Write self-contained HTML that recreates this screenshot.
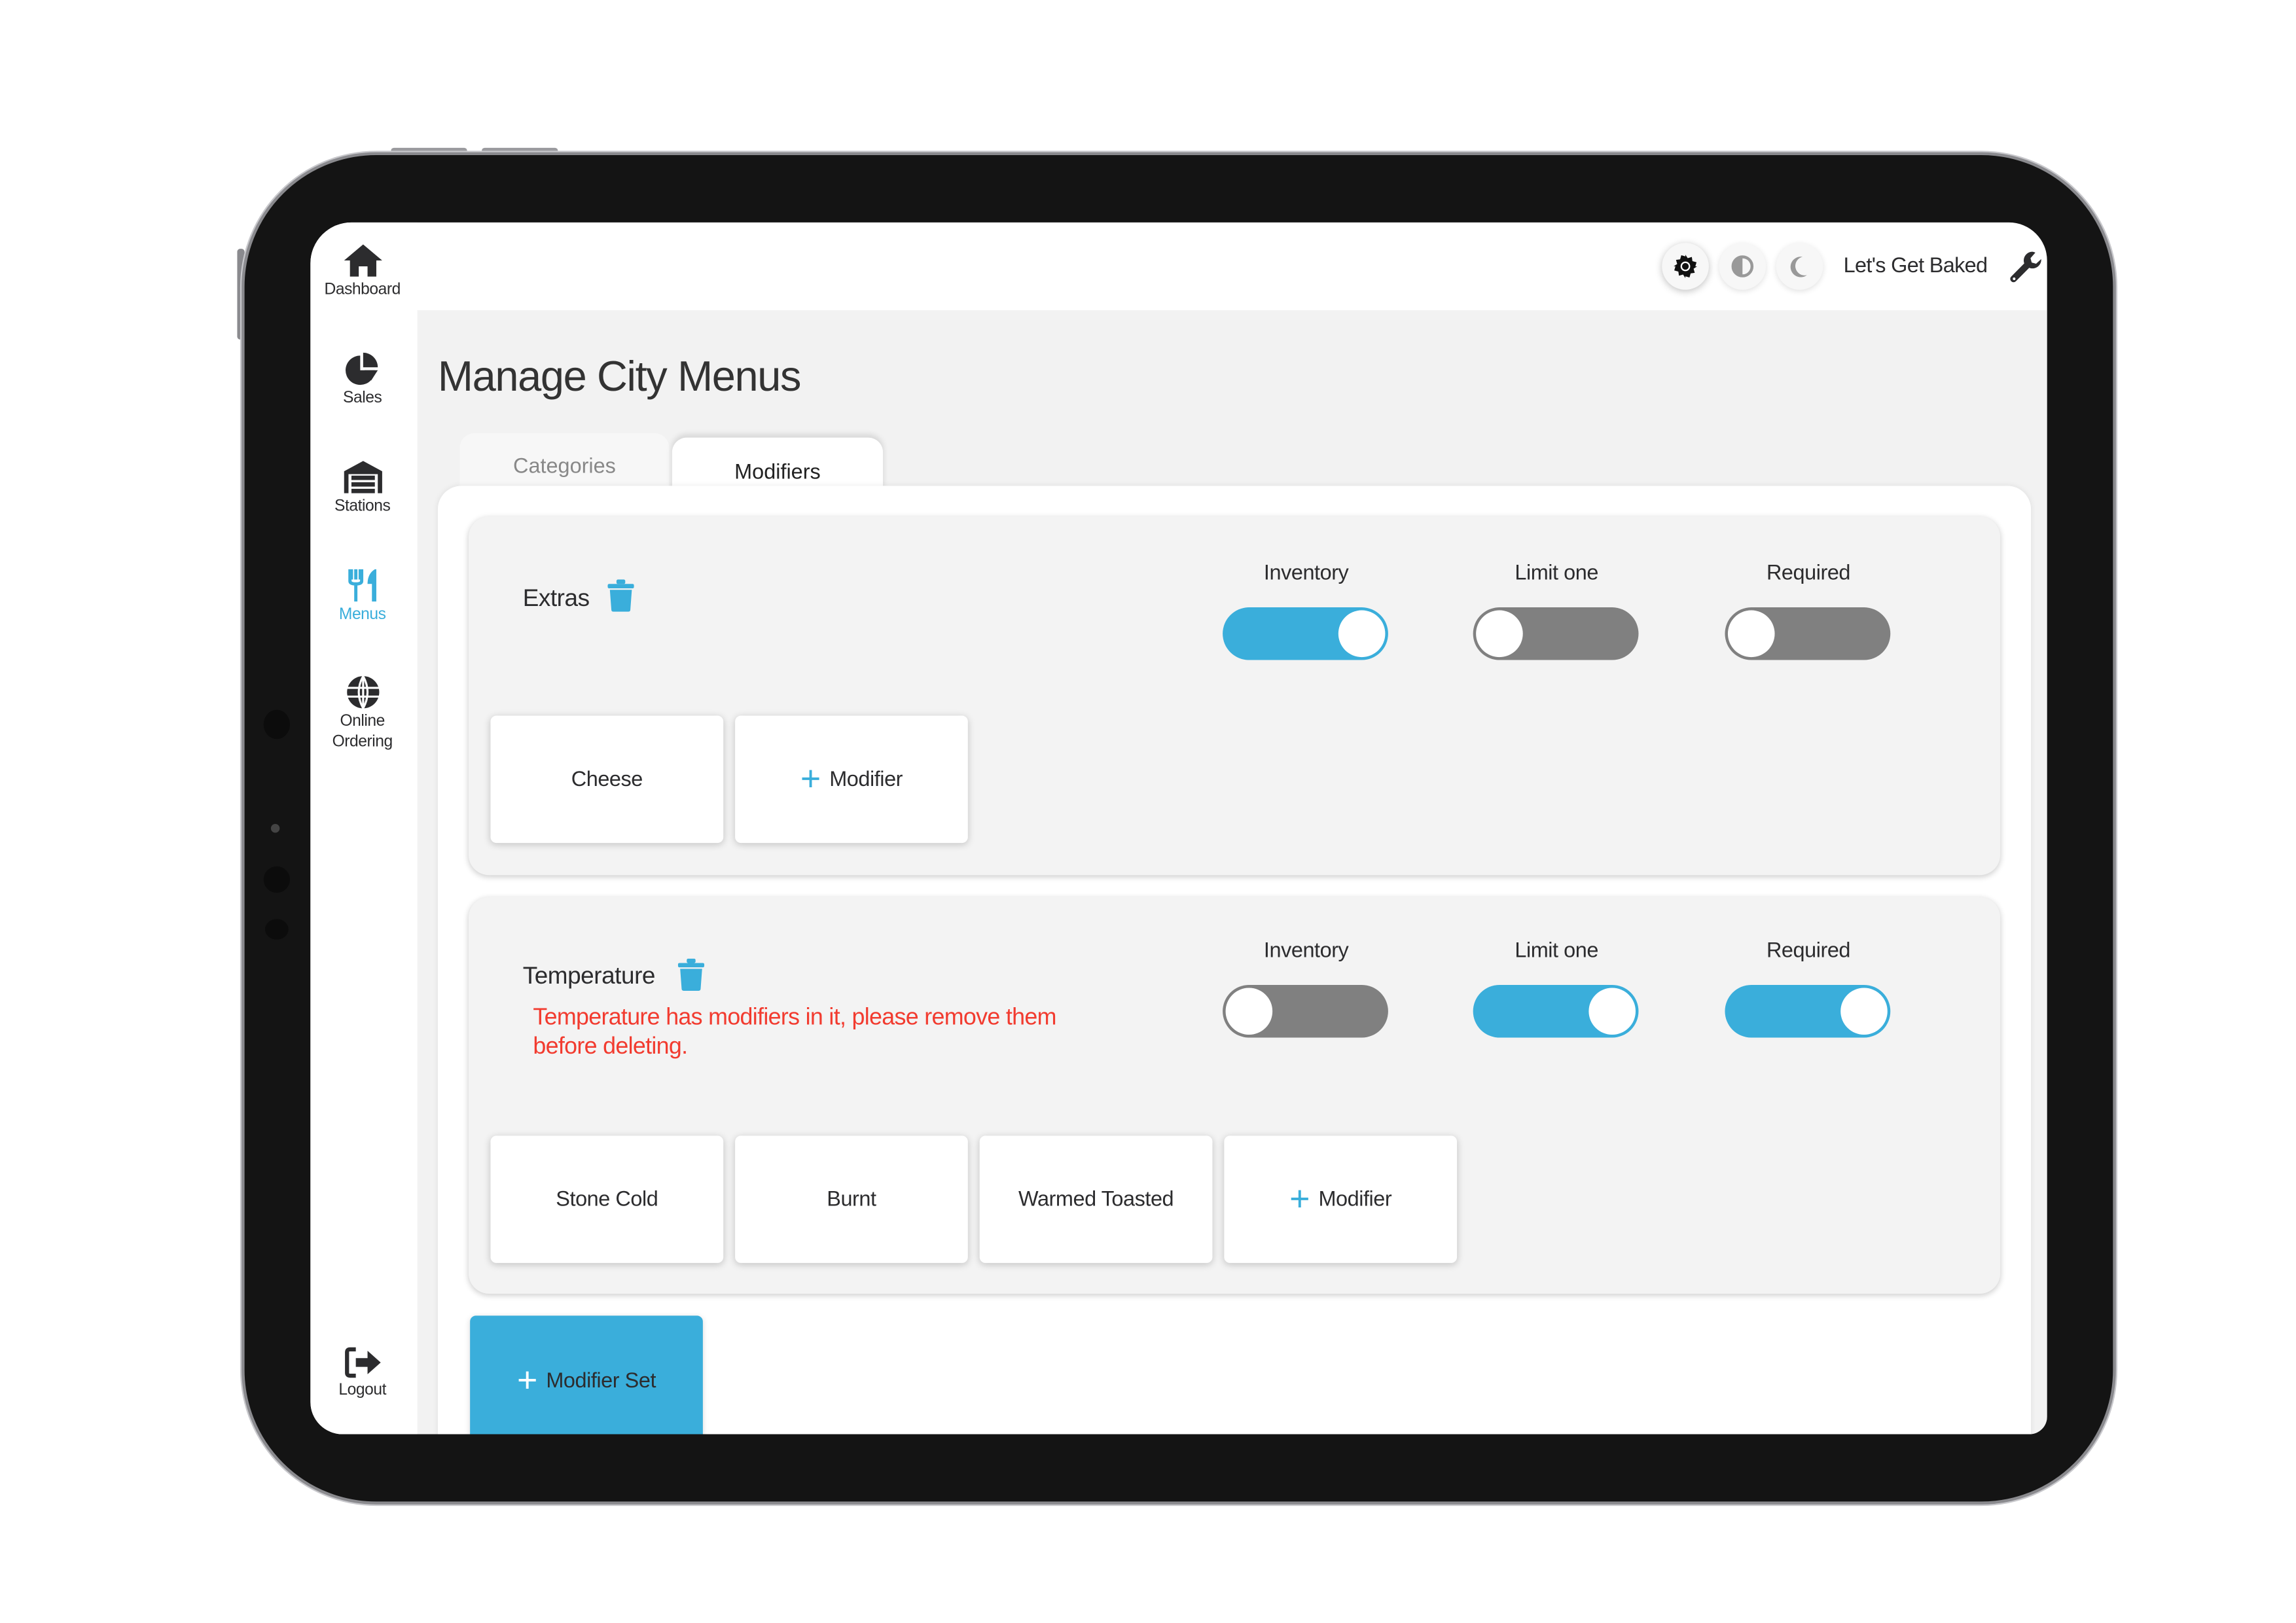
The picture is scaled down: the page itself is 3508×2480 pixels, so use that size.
<!DOCTYPE html>
<html><head><meta charset="utf-8"><style>
*{margin:0;padding:0;box-sizing:border-box}
html,body{width:3508px;height:2480px;background:#fff;overflow:hidden}
#w{position:absolute;left:0;top:0;width:1568px;height:1109px;transform:scale(2.23724,2.23625);transform-origin:0 0;font-family:"Liberation Sans",sans-serif;color:#2c2c2e}
.a{position:absolute}
.dev{left:165px;top:104px;width:1280px;height:924px;background:#141414;border-radius:92px;border:2px solid #8a8a8e;box-shadow:0 0 0 1px #c8c8cc}
.screen{left:212px;top:152px;width:1186px;height:828px;background:#fff;border-radius:28px 26px 12px 22px;overflow:hidden}
.side{left:0;top:0;width:73px;height:828px;background:#fff}
.nav{position:absolute;left:0;width:71px;text-align:center;font-size:11px;line-height:14px;color:#2c2c2e;letter-spacing:-.2px}
.nav svg{display:block;margin:0 auto 1px}
.content{left:73px;top:60px;width:1113px;height:768px;background:#f2f2f2}
.card{background:#f3f3f3;border-radius:14px;box-shadow:0 1px 4px rgba(0,0,0,.2)}
.lbl{font-size:14.5px;text-align:center;width:120px;letter-spacing:-.2px}
.tg{width:113px;height:36px;border-radius:18px}
.on{background:#3aaedb}
.off{background:#808080}
.kn{position:absolute;top:2px;width:32px;height:32px;border-radius:50%;background:#fff}
.btn{width:159px;height:87px;background:#fff;border-radius:4px;box-shadow:0 1px 5px rgba(0,0,0,.2);display:flex;align-items:center;justify-content:center;font-size:14.5px;color:#2c2c2e;letter-spacing:-.2px}
.plus{color:#3aaedb;font-size:24px;margin-right:6px;font-weight:300;line-height:1}
.circ{width:32px;height:32px;border-radius:50%;background:#f7f7f7;box-shadow:0 1px 4px rgba(0,0,0,.12);display:flex;align-items:center;justify-content:center}
</style></head><body><div id="w">
<div class="a" style="left:267px;top:101px;width:52px;height:4px;background:#9a9a9e;border-radius:2px"></div>
<div class="a" style="left:329px;top:101px;width:52px;height:4px;background:#9a9a9e;border-radius:2px"></div>
<div class="a" style="left:162px;top:170px;width:5px;height:62px;background:#8a8a8e;border-radius:2px"></div>
<div class="a dev"></div>
<div class="a" style="left:180px;top:485px;width:18px;height:20px;border-radius:50%;background:#0c0c0c"></div>
<div class="a" style="left:185px;top:563px;width:6px;height:6px;border-radius:50%;background:#444"></div>
<div class="a" style="left:180px;top:592px;width:18px;height:18px;border-radius:50%;background:#0c0c0c"></div>
<div class="a" style="left:181px;top:628px;width:16px;height:14px;border-radius:50%;background:#0c0c0c"></div>
<div class="a screen">
 <div class="a side">
  <div class="nav" style="top:14px"><svg width="28" height="24" viewBox="0 0 28 24"><path d="M14 1L1 12h4v11h6v-7h6v7h6V12h4z" fill="#2c2c2e"/></svg>Dashboard</div>
  <div class="nav" style="top:88px"><svg width="26" height="24" viewBox="0 0 26 24"><path d="M11 3A10 10 0 1 0 21 13H11z" fill="#2c2c2e"/><path d="M13 1v10h10A10 10 0 0 0 13 1z" fill="#2c2c2e"/><path d="M14 13h9l-4.5 7z" fill="#2c2c2e"/></svg>Sales</div>
  <div class="nav" style="top:162px"><svg width="30" height="24" viewBox="0 0 30 24"><path d="M2 23V8L15 1l13 7v15h-3V10H5v13z" fill="#2c2c2e"/><rect x="7" y="11" width="16" height="3" fill="#2c2c2e"/><rect x="7" y="15.5" width="16" height="3" fill="#2c2c2e"/><rect x="7" y="20" width="16" height="3" fill="#2c2c2e"/></svg>Stations</div>
  <div class="nav" style="top:236px;color:#3aaedb"><svg width="26" height="24" viewBox="0 0 26 24"><path d="M5 1v7M8 1v7M11 1v7M4 1v8q0 2 4 2q4 0 4-2V1M8 10v13" stroke="#3aaedb" stroke-width="2.2" fill="none"/><path d="M21 1q-5 3-5 10h3v12h3V1z" fill="#3aaedb"/></svg>Menus</div>
  <div class="nav" style="top:309px"><svg width="26" height="24" viewBox="0 0 26 24"><circle cx="13" cy="12" r="11" fill="#2c2c2e"/><path d="M2 9h22M2 15h22M13 1v22M13 1q-6 11 0 22M13 1q6 11 0 22" stroke="#fff" stroke-width="1.4" fill="none"/></svg>Online<br>Ordering</div>
  <div class="nav" style="top:768px"><svg width="28" height="22" viewBox="0 0 28 22"><path d="M9 2H5Q3 2 3 4v14q0 2 2 2h4" stroke="#2c2c2e" stroke-width="2.8" fill="none"/><path d="M9 8h8V3l9 8-9 8v-5H9z" fill="#2c2c2e"/></svg>Logout</div>
 </div>
 <div class="a" style="left:923px;top:14px" ><div class="circ" style="box-shadow:0 1px 5px rgba(0,0,0,.25)"><svg width="16" height="16" viewBox="0 0 16 16"><path d="M8 0l1.6 2.4 2.8-.8.4 2.8 2.8.8-.8 2.8L16 8l-2.4 1.6.8 2.8-2.8.4-.8 2.8-2.8-.8L8 16l-1.6-2.4-2.8.8-.4-2.8-2.8-.8.8-2.8L0 8l2.4-1.6-.8-2.8 2.8-.4.8-2.8 2.8.8z" fill="#111"/><circle cx="8" cy="8" r="3.3" fill="#fff"/><circle cx="8" cy="8" r="2.3" fill="#111"/></svg></div></div>
 <div class="a" style="left:962px;top:14px"><div class="circ"><svg width="16" height="16" viewBox="0 0 16 16"><circle cx="8" cy="8" r="6.5" fill="none" stroke="#999" stroke-width="2"/><path d="M8 1.5a6.5 6.5 0 0 0 0 13z" fill="#999"/></svg></div></div>
 <div class="a" style="left:1001px;top:14px"><div class="circ"><svg width="16" height="16" viewBox="0 0 16 16"><path d="M10 1.5A7 7 0 1 0 13 14 6 6 0 0 1 10 1.5z" fill="#999"/></svg></div></div>
 <div class="a" style="left:1047px;top:22px;font-size:14.5px;letter-spacing:-.3px;color:#2c2c2e">Let's Get Baked</div>
 <div class="a" style="left:1160px;top:19px"><svg width="24" height="24" viewBox="0 0 24 24"><path d="M16 1a6 6 0 0 0-5.6 8L1.5 18a2.2 2.2 0 0 0 3.2 3.2L13.8 12A6 6 0 0 0 22 6l-3.5 3.2-3-.8-.8-3L18 1.6A6 6 0 0 0 16 1z" fill="#2c2c2e"/><circle cx="3.5" cy="19.5" r=".9" fill="#fff"/></svg></div>
 <div class="a content">
  <div class="a" style="left:14px;top:30px;font-size:29px;letter-spacing:-.6px;color:#333">Manage City Menus</div>
  <div class="a" style="left:29px;top:84px;width:143px;height:40px;background:#f7f7f7;border-radius:10px 10px 0 0;font-size:14.5px;color:#888;text-align:center;line-height:46px">Categories</div>
  <div class="a" style="left:174px;top:87px;width:144px;height:37px;background:#fff;border-radius:10px 10px 0 0;box-shadow:0 -2px 4px rgba(0,0,0,.12);font-size:14.5px;color:#222;text-align:center;line-height:48px">Modifiers</div>
  <div class="a" style="left:14px;top:120px;width:1088px;height:700px;background:#fff;border-radius:16px;box-shadow:0 0 4px rgba(0,0,0,.08)">
   <div class="a card" style="left:21px;top:21px;width:1046px;height:245px">
    <div class="a" style="left:37px;top:47px;font-size:16.5px;letter-spacing:-.2px">Extras</div>
    <div class="a" style="left:95px;top:43px"><svg width="18" height="22" viewBox="0 0 18 22"><rect x="0" y="3" width="18" height="3" rx="1" fill="#3aaedb"/><rect x="6" y="0" width="6" height="3" rx="1" fill="#3aaedb"/><path d="M1.5 7h15l-1 13.5q0 1.5-1.5 1.5H4q-1.5 0-1.5-1.5z" fill="#3aaedb"/></svg></div>
    <div class="a lbl" style="left:512px;top:31px">Inventory</div>
    <div class="a lbl" style="left:683px;top:31px">Limit one</div>
    <div class="a lbl" style="left:855px;top:31px">Required</div>
    <div class="a tg on" style="left:515px;top:62px"><div class="kn" style="left:79px"></div></div>
    <div class="a tg off" style="left:686px;top:62px"><div class="kn" style="left:2px"></div></div>
    <div class="a tg off" style="left:858px;top:62px"><div class="kn" style="left:2px"></div></div>
    <div class="a btn" style="left:15px;top:136px">Cheese</div>
    <div class="a btn" style="left:182px;top:136px"><span class="plus">+</span>Modifier</div>
   </div>
   <div class="a card" style="left:21px;top:281px;width:1046px;height:271px">
    <div class="a" style="left:37px;top:45px;font-size:16.5px;letter-spacing:-.2px">Temperature</div>
    <div class="a" style="left:143px;top:42px"><svg width="18" height="22" viewBox="0 0 18 22"><rect x="0" y="3" width="18" height="3" rx="1" fill="#3aaedb"/><rect x="6" y="0" width="6" height="3" rx="1" fill="#3aaedb"/><path d="M1.5 7h15l-1 13.5q0 1.5-1.5 1.5H4q-1.5 0-1.5-1.5z" fill="#3aaedb"/></svg></div>
    <div class="a" style="left:44px;top:73px;font-size:16px;line-height:20px;letter-spacing:-.3px;color:#f23b2f;width:400px">Temperature has modifiers in it, please remove them<br>before deleting.</div>
    <div class="a lbl" style="left:512px;top:29px">Inventory</div>
    <div class="a lbl" style="left:683px;top:29px">Limit one</div>
    <div class="a lbl" style="left:855px;top:29px">Required</div>
    <div class="a tg off" style="left:515px;top:60px"><div class="kn" style="left:2px"></div></div>
    <div class="a tg on" style="left:686px;top:60px"><div class="kn" style="left:79px"></div></div>
    <div class="a tg on" style="left:858px;top:60px"><div class="kn" style="left:79px"></div></div>
    <div class="a btn" style="left:15px;top:163px">Stone Cold</div>
    <div class="a btn" style="left:182px;top:163px">Burnt</div>
    <div class="a btn" style="left:349px;top:163px">Warmed Toasted</div>
    <div class="a btn" style="left:516px;top:163px"><span class="plus">+</span>Modifier</div>
   </div>
   <div class="a" style="left:22px;top:567px;width:159px;height:100px;background:#3aaedb;border-radius:4px;box-shadow:0 1px 4px rgba(0,0,0,.15)">
    <div class="a" style="left:0;top:31px;width:159px;text-align:center;font-size:14.5px;letter-spacing:-.2px;color:#2c2c2e"><span style="color:#fff;font-size:24px;font-weight:300;vertical-align:-3px;margin-right:6px">+</span>Modifier Set</div>
   </div>
  </div>
 </div>
</div>
</div></body></html>
